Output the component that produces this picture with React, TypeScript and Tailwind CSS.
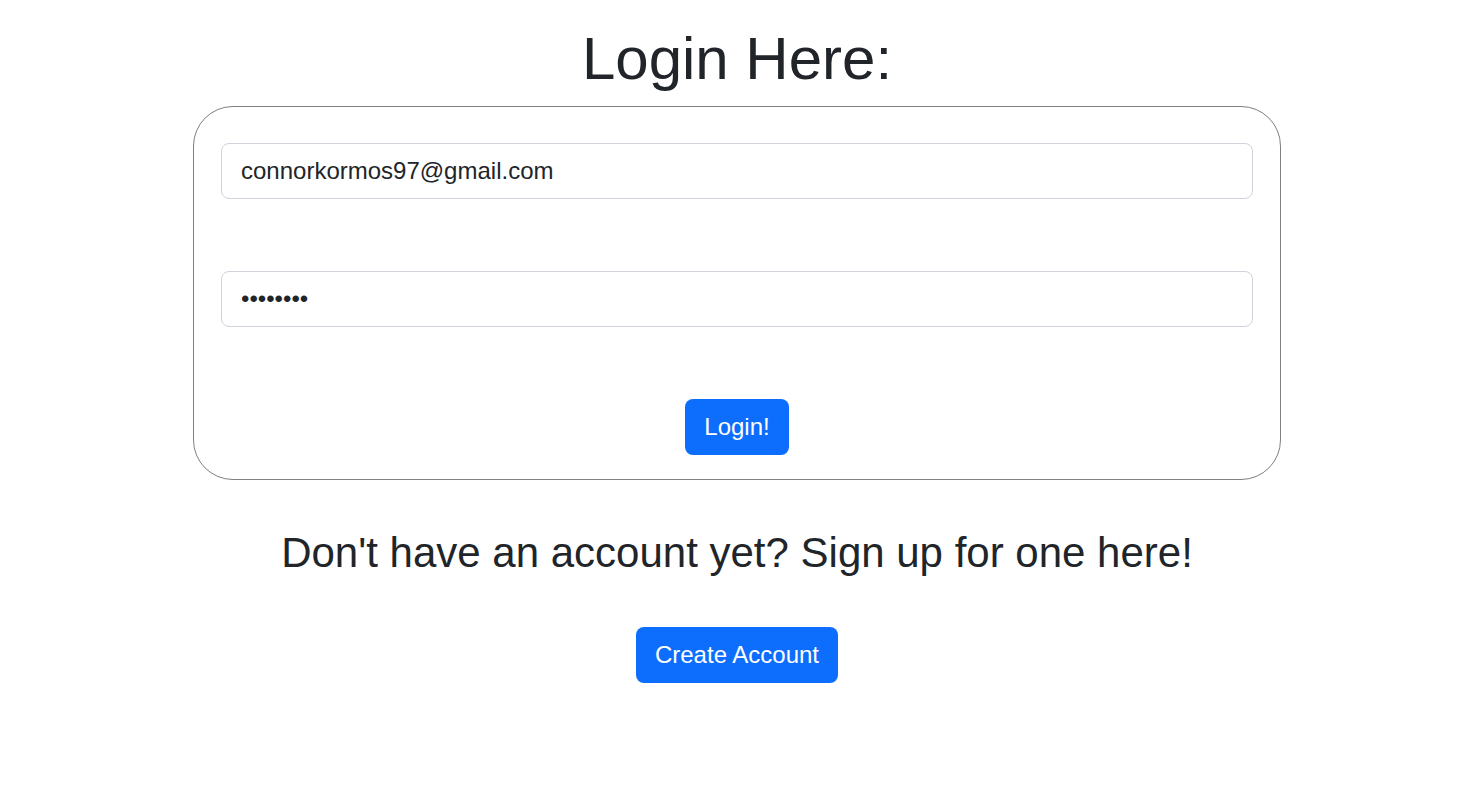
export default function App() {
  return (
    <div className="min-h-[796px] bg-white text-[#212529]" style={{ fontFamily: '"Liberation Sans", Arial, sans-serif' }}>
      <div className="flex flex-col items-center pr-[3px] pt-[23px]">
        <h1 className="text-[60px] leading-[72px]">Login Here:</h1>

        {/* Login card */}
        <form
          className="mt-[11px] flex w-[1088px] flex-col rounded-[40px] border border-[#808080] px-[27px] pb-[24px] pt-[36px]"
          onSubmit={(e) => e.preventDefault()}
        >
          <input
            type="email"
            defaultValue="connorkormos97@gmail.com"
            className="h-[56px] w-full rounded-[8px] border border-[#ced4da] px-[19px] text-[24px] outline-none"
          />
          <input
            type="password"
            defaultValue="password"
            className="mt-[72px] h-[56px] w-full rounded-[8px] border border-[#ced4da] px-[19px] text-[24px] outline-none"
          />
          <div className="mt-[72px] flex justify-center">
            <button
              type="submit"
              className="h-[56px] rounded-[8px] bg-[#0d6efd] px-[19px] text-[24px] text-white"
            >
              Login!
            </button>
          </div>
        </form>

        <h3 className="mt-[48px] text-[42px] leading-[50px]">Don't have an account yet? Sign up for one here!</h3>

        <button className="mt-[49px] h-[56px] rounded-[8px] bg-[#0d6efd] px-[19px] text-[24px] text-white">
          Create Account
        </button>
      </div>
    </div>
  );
}
